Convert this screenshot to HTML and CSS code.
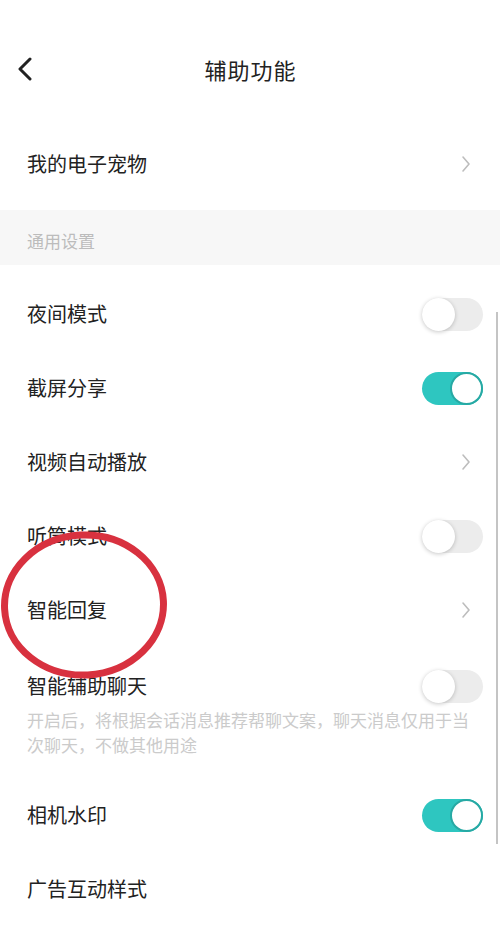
FILE: index.html
```html
<!DOCTYPE html>
<html lang="zh-CN">
<head>
<meta charset="utf-8">
<link rel="stylesheet" href="styles.css">
</head>
<body>
<div class="page">
  <header class="header">
    <svg class="back" width="16" height="24" viewBox="0 0 16 24"><path d="M13 2 L3 12 L13 22" fill="none" stroke="#222" stroke-width="3" stroke-linecap="round" stroke-linejoin="round"/></svg>
    <div class="title">辅助功能</div>
  </header>

  <div class="row pet">
    <span class="label">我的电子宠物</span>
    <svg class="chev" width="10" height="18" viewBox="0 0 10 18"><path d="M2 2 L8 9 L2 16" fill="none" stroke="#bdbdbd" stroke-width="1.6" stroke-linecap="round" stroke-linejoin="round"/></svg>
  </div>

  <div class="section">通用设置</div>

  <div class="list">
    <div class="row">
      <span class="label">夜间模式</span>
      <span class="toggle"><span class="knob"></span></span>
    </div>
    <div class="row">
      <span class="label">截屏分享</span>
      <span class="toggle on"><span class="knob"></span></span>
    </div>
    <div class="row">
      <span class="label">视频自动播放</span>
      <svg class="chev" width="10" height="18" viewBox="0 0 10 18"><path d="M2 2 L8 9 L2 16" fill="none" stroke="#bdbdbd" stroke-width="1.6" stroke-linecap="round" stroke-linejoin="round"/></svg>
    </div>
    <div class="row">
      <span class="label">听筒模式</span>
      <span class="toggle"><span class="knob"></span></span>
    </div>
    <div class="row">
      <span class="label">智能回复</span>
      <svg class="chev" width="10" height="18" viewBox="0 0 10 18"><path d="M2 2 L8 9 L2 16" fill="none" stroke="#bdbdbd" stroke-width="1.6" stroke-linecap="round" stroke-linejoin="round"/></svg>
    </div>
    <div class="row-desc">
      <div class="row-head">
        <span class="label">智能辅助聊天</span>
        <span class="toggle"><span class="knob"></span></span>
      </div>
      <p class="desc">开启后，将根据会话消息推荐帮聊文案，聊天消息仅用于当次聊天，不做其他用途</p>
    </div>
    <div class="row">
      <span class="label">相机水印</span>
      <span class="toggle on"><span class="knob"></span></span>
    </div>
    <div class="row">
      <span class="label">广告互动样式</span>
    </div>
  </div>

  <div class="scrollbar"></div>
  <svg class="circle" width="172" height="150" viewBox="0 0 172 150">
    <ellipse cx="85" cy="75" rx="79.5" ry="70" fill="none" stroke="#d8313f" stroke-width="7" transform="rotate(-3 85 75)"/>
  </svg>
</div>
</body>
</html>
```

FILE: styles.css
```css
* { box-sizing: border-box; }
html, body { margin: 0; padding: 0; background: #fff; }
body {
  font-family: "Noto Sans CJK SC", "Noto Sans", sans-serif;
  color: #222;
}
.page {
  position: relative;
  width: 500px;
  height: 931px;
  overflow: hidden;
  background: #fff;
}
.header {
  position: relative;
  height: 138px;
  display: flex;
  align-items: center;
  justify-content: center;
}
.back {
  position: absolute;
  left: 17px;
  top: 57px;
}
.title {
  font-size: 22px;
  line-height: 30px;
  color: #222;
  letter-spacing: 1px;
  margin-left: 1px;
}
.row {
  height: 74px;
  display: flex;
  align-items: center;
  justify-content: space-between;
  padding: 0 17px 0 27px;
}
.row.pet {
  height: 52px;
  margin-bottom: 20px;
}
.label {
  font-size: 20px;
  line-height: 24px;
  color: #222;
}
.chev {
  margin-right: 12px;
}
.section {
  height: 55px;
  background: #f7f7f7;
  padding: 19px 0 0 27px;
  font-size: 17px;
  line-height: 24px;
  color: #bcbcbc;
}
.list {
  padding-top: 12px;
}
.toggle {
  position: relative;
  width: 61px;
  height: 33px;
  border-radius: 17px;
  background: #ececec;
  flex: none;
}
.knob {
  position: absolute;
  left: 0;
  top: 0;
  width: 33px;
  height: 33px;
  border-radius: 50%;
  background: #fff;
  box-shadow: 0 1px 4px rgba(0,0,0,0.22);
}
.toggle.on {
  background: #2ec6c0;
}
.toggle.on .knob {
  left: 28px;
  box-shadow: none;
  border: 2.5px solid #27a9a4;
}
.row-desc {
  padding: 27px 17px 21px 27px;
}
.row-head {
  display: flex;
  align-items: center;
  justify-content: space-between;
  height: 24px;
}
.desc {
  margin: 9px 0 0 0;
  width: 456px;
  font-size: 17px;
  line-height: 25px;
  color: #cbcbcb;
}
.scrollbar {
  position: absolute;
  right: 2px;
  top: 312px;
  width: 2px;
  height: 532px;
  background: #c4c4c4;
}
.circle {
  position: absolute;
  left: -1px;
  top: 530px;
}
```
